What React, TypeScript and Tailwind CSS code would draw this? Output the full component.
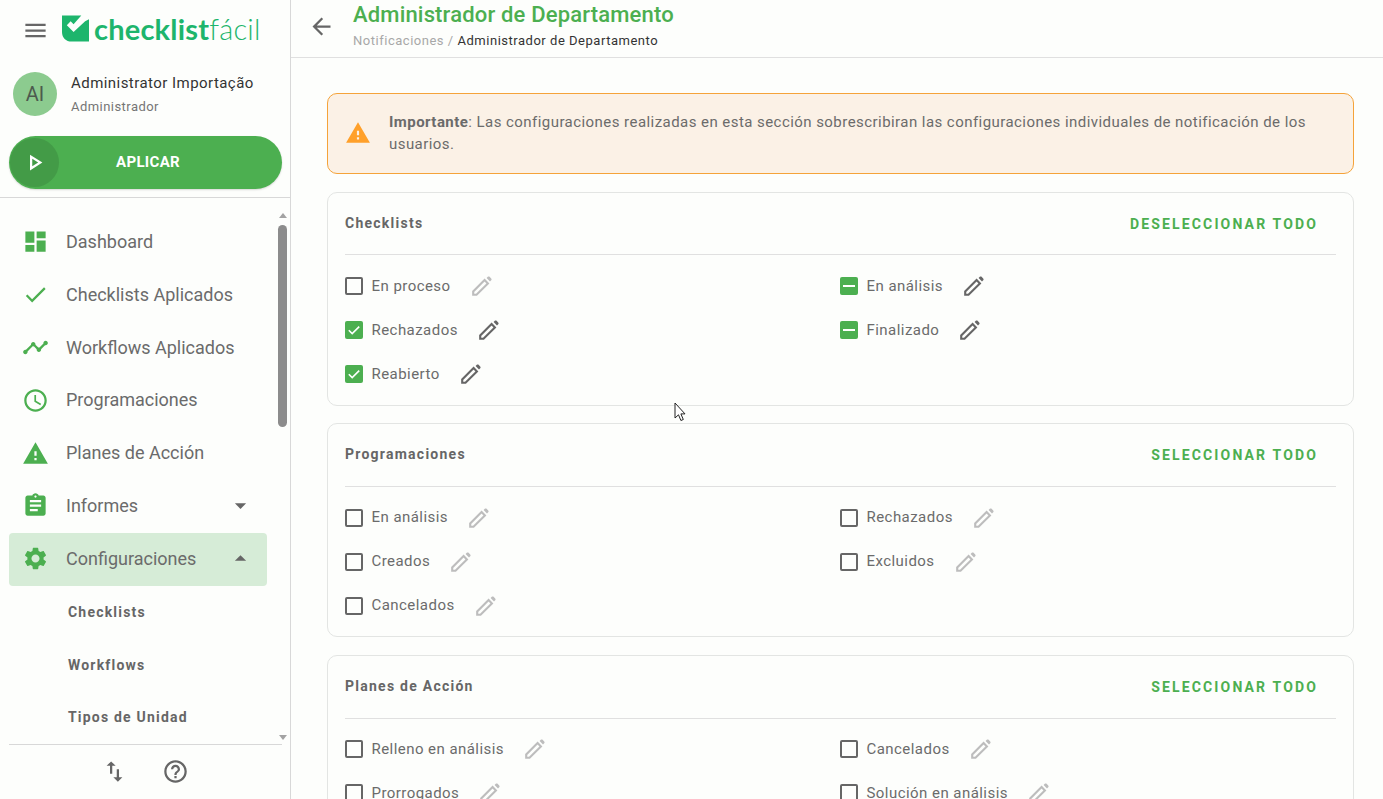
function Icon({ d, className }: { d: string; className: string }) {
  return (
    <svg viewBox="0 0 24 24" fill="currentColor" className={className}>
      <path d={d} />
    </svg>
  );
}

function Pencil({ className }: { className: string }) {
  return (
    <svg viewBox="0 0 20 20" className={className}>
      <path d="M1.2 18.8v-3.3L12.6 4.1l3.3 3.3L4.5 18.8z" fill="none" stroke="currentColor" strokeWidth="2.1" />
      <path d="M14.6 2l1.2-1.2c.5-.5 1.3-.5 1.8 0l1.6 1.6c.5.5.5 1.3 0 1.8L18 5.4z" fill="currentColor" />
    </svg>
  );
}

const NAV = [
  { label: 'Dashboard', d: 'M3 13h8V3H3v10zm0 8h8v-6H3v6zm10 0h8V11h-8v10zm0-18v6h8V3h-8z' },
  { label: 'Checklists Aplicados', d: 'M9 16.17L4.83 12l-1.42 1.41L9 19 21 7l-1.41-1.41z' },
  { label: 'Workflows Aplicados', d: 'M23 8c0 1.1-.9 2-2 2-.18 0-.35-.02-.51-.07l-3.56 3.55c.05.16.07.34.07.52 0 1.1-.9 2-2 2s-2-.9-2-2c0-.18.02-.36.07-.52l-2.55-2.55c-.16.05-.34.07-.52.07s-.36-.02-.52-.07l-4.55 4.56c.05.16.07.33.07.51 0 1.1-.9 2-2 2s-2-.9-2-2 .9-2 2-2c.18 0 .35.02.51.07l4.56-4.55C8.02 9.36 8 9.18 8 9c0-1.1.9-2 2-2s2 .9 2 2c0 .18-.02.36-.07.52l2.55 2.55c.16-.05.34-.07.52-.07s.36.02.52.07l3.55-3.56C19.02 8.35 19 8.18 19 8c0-1.1.9-2 2-2s2 .9 2 2z' },
  { label: 'Programaciones', d: 'M11.99 2C6.47 2 2 6.48 2 12s4.47 10 9.99 10C17.52 22 22 17.52 22 12S17.52 2 11.99 2zM12 20c-4.42 0-8-3.58-8-8s3.58-8 8-8 8 3.58 8 8-3.58 8-8 8zm.5-13H11v6l5.25 3.15.75-1.23-4.5-2.67z' },
  { label: 'Planes de Acción', d: 'M1 21h22L12 2 1 21zm12-3h-2v-2h2v2zm0-4h-2v-4h2v4z' },
  { label: 'Informes', d: 'M19 3h-4.18C14.4 1.84 13.3 1 12 1c-1.3 0-2.4.84-2.82 2H5c-1.1 0-2 .9-2 2v14c0 1.1.9 2 2 2h14c1.1 0 2-.9 2-2V5c0-1.1-.9-2-2-2zm-7 0c.55 0 1 .45 1 1s-.45 1-1 1-1-.45-1-1 .45-1 1-1zm2 14H7v-2h7v2zm3-4H7v-2h10v2zm0-4H7V7h10v2z', caret: 'down' },
  { label: 'Configuraciones', d: 'M19.14 12.94c.04-.3.06-.61.06-.94 0-.32-.02-.64-.07-.94l2.03-1.58c.18-.14.23-.41.12-.61l-1.92-3.32c-.12-.22-.37-.29-.59-.22l-2.39.96c-.5-.38-1.03-.7-1.62-.94l-.36-2.54c-.04-.24-.24-.41-.48-.41h-3.84c-.24 0-.43.17-.47.41l-.36 2.54c-.59.24-1.13.57-1.62.94l-2.39-.96c-.22-.08-.47 0-.59.22L2.74 8.87c-.12.21-.08.47.12.61l2.03 1.58c-.05.3-.09.63-.09.94s.02.64.07.94l-2.03 1.58c-.18.14-.23.41-.12.61l1.92 3.32c.12.22.37.29.59.22l2.39-.96c.5.38 1.03.7 1.62.94l.36 2.54c.05.24.24.41.48.41h3.84c.24 0 .44-.17.47-.41l.36-2.54c.59-.24 1.13-.56 1.62-.94l2.39.96c.22.08.47 0 .59-.22l1.92-3.32c.12-.22.07-.47-.12-.61l-2.01-1.58zM12 15.6c-1.98 0-3.6-1.62-3.6-3.6s1.62-3.6 3.6-3.6 3.6 1.62 3.6 3.6-1.62 3.6-3.6 3.6z', caret: 'up', active: true },
];

type Opt = { label: string; state?: 'checked' | 'mixed' };

const SECTIONS: { title: string; action: string; left: Opt[]; right: Opt[] }[] = [
  {
    title: 'Checklists',
    action: 'DESELECCIONAR TODO',
    left: [{ label: 'En proceso' }, { label: 'Rechazados', state: 'checked' }, { label: 'Reabierto', state: 'checked' }],
    right: [{ label: 'En análisis', state: 'mixed' }, { label: 'Finalizado', state: 'mixed' }],
  },
  {
    title: 'Programaciones',
    action: 'SELECCIONAR TODO',
    left: [{ label: 'En análisis' }, { label: 'Creados' }, { label: 'Cancelados' }],
    right: [{ label: 'Rechazados' }, { label: 'Excluidos' }],
  },
  {
    title: 'Planes de Acción',
    action: 'SELECCIONAR TODO',
    left: [{ label: 'Relleno en análisis' }, { label: 'Prorrogados' }],
    right: [{ label: 'Cancelados' }, { label: 'Solución en análisis' }],
  },
];

function Checkbox({ state }: { state?: Opt['state'] }) {
  if (!state) return <span className="w-[18px] h-[18px] rounded-[2px] border-2 border-[#666666] shrink-0" />;
  return (
    <span className="w-[18px] h-[18px] rounded-[2px] bg-[#4caf50] shrink-0 flex items-center justify-center">
      {state === 'checked' ? (
        <svg viewBox="0 0 18 18" className="w-[18px] h-[18px]" fill="none" stroke="#ffffff" strokeWidth="1.6">
          <path d="M3.8 9.2l3.4 3.4 7-7" />
        </svg>
      ) : (
        <span className="w-3 h-0.5 bg-white" />
      )}
    </span>
  );
}

function Option({ label, state }: Opt) {
  return (
    <div className="h-11 flex items-center">
      <Checkbox state={state} />
      <span className="ml-[8.5px] text-[15px] tracking-[0.45px] text-[#6b6b6b]">{label}</span>
      <Pencil className={`ml-[21px] w-5 h-5 ${state ? 'text-[#666666]' : 'text-[#bdbdbd]'}`} />
    </div>
  );
}

function Section({ title, action, left, right }: (typeof SECTIONS)[number]) {
  return (
    <section className="border border-[#e3e5e3] rounded-[10px] px-[17px] pb-[8.7px] mb-[17.6px] shrink-0">
      <div className="h-[62.7px] flex items-center justify-between border-b border-[#e0e0e0] pr-[18px]">
        <h2 className="text-sm font-bold tracking-[1.25px] text-[#666666] -mt-[1.5px]">{title}</h2>
        <button className="text-sm font-bold tracking-[2.15px] text-[#4caf50]">{action}</button>
      </div>
      <div className="grid grid-cols-[495px_1fr] pt-[8.6px]">
        <div>{left.map((o) => <Option key={o.label} {...o} />)}</div>
        <div>{right.map((o) => <Option key={o.label} {...o} />)}</div>
      </div>
    </section>
  );
}

function Logo() {
  return (
    <div className="flex items-center ml-[13px]">
      <svg viewBox="0 0 28 27" className="w-[27px] h-[27px] text-[#1db56c]">
        <path fill="currentColor" d="M0 0h12l8 0-8 9-3-3-4 4 7 7L24 6l4-2v23H10C4 27 0 23 0 17z" />
      </svg>
      <span className="ml-[5px] text-[29px] leading-none tracking-[0.2px] text-[#1db56c] font-['Lato',sans-serif]">
        <span className="font-bold">checklist</span>
        <span className="font-light">fácil</span>
      </span>
    </div>
  );
}

function Sidebar() {
  return (
    <aside className="w-[291px] h-screen shrink-0 flex flex-col border-r border-[#d8d8d8]">
      <div className="h-[57px] flex items-center pl-[22px] shrink-0">
        <Icon d="M3 18h18v-2H3v2zm0-5h18v-2H3v2zm0-7v2h18V6H3z" className="w-[27px] h-[27px] mt-1 text-[#666666]" />
        <Logo />
      </div>
      <div className="h-[79px] flex items-center pl-[13px] shrink-0 pb-[5px]">
        <div className="w-11 h-11 rounded-full bg-[#8ccb8f] flex items-center justify-center text-xl text-[#4d5a4e]">AI</div>
        <div className="ml-[14px] mt-[2px]">
          <div className="text-[15px] tracking-[0.45px] text-[#333333] leading-5">Administrator Importação</div>
          <div className="text-[13px] tracking-[0.45px] text-[#757575] leading-5 mt-[4px]">Administrador</div>
        </div>
      </div>
      <div className="px-[9px] shrink-0">
        <button className="w-[273px] h-[53px] rounded-full bg-[#4caf50] flex items-center shadow-[0_1px_2px_rgba(0,0,0,0.15)]">
          <span className="ml-px w-[49px] h-[49px] rounded-full bg-[#439b47] flex items-center justify-center">
            <Icon d="M10 8.64L15.27 12 10 15.36V8.64M8 5v14l11-7L8 5z" className="w-[27px] h-[27px] text-white" />
          </span>
          <span className="flex-1 pr-[45px] text-[15px] font-bold text-white tracking-[0.3px]">APLICAR</span>
        </button>
      </div>
      <div className="mt-2 border-t border-[#d8d8d8] flex-1 min-h-0 flex relative overflow-hidden">
        <nav className="flex-1 pl-[9px] pt-[17.6px] pr-[11px]">
          {NAV.map((n) => (
            <div key={n.label} className={`flex items-center pl-[13px] pr-[13px] rounded ${n.active ? 'h-[52.4px] mt-px pb-[1.4px] bg-[#d6ecd7]' : 'h-[52.8px]'}`}>
              <Icon d={n.d} className="w-[27px] h-[27px] text-[#4caf50] shrink-0" />
              <span className="ml-[17px] text-lg text-[#6b6b6b] flex-1">{n.label}</span>
              {n.caret && (
                <Icon d={n.caret === 'down' ? 'M7 10l5 5 5-5z' : 'M7 14l5-5 5 5z'} className="w-[27px] h-[27px] text-[#666666]" />
              )}
            </div>
          ))}
          {['Checklists', 'Workflows', 'Tipos de Unidad'].map((s) => (
            <div key={s} className="h-[52.6px] flex items-center pl-[59px] text-sm font-bold tracking-[1.2px] text-[#666666]">{s}</div>
          ))}
        </nav>
        <div className="w-[9px] mr-[3px] flex flex-col items-center pt-[15px] pb-[4px] h-[546px]">
          <span className="w-0 h-0 border-x-4 border-x-transparent border-b-[5px] border-b-[#a3a3a3]" />
          <span className="w-[9px] h-[202px] rounded-full bg-[#8c8c8c] mt-[7px]" />
          <span className="mt-auto w-0 h-0 border-x-4 border-x-transparent border-t-[5px] border-t-[#a3a3a3]" />
        </div>
      </div>
      <div className="h-[55px] shrink-0 mx-[9px] w-[273px] border-t border-[#d8d8d8] flex items-center justify-center gap-[34px] pr-[2px] pb-[2px]">
        <Icon d="M16 17.01V10h-2v7.01h-3L15 21l4-3.99h-3zM9 3L5 6.99h3V14h2V6.99h3L9 3z" className="w-[27px] h-[27px] text-[#666666]" />
        <Icon d="M11 18h2v-2h-2v2zm1-16C6.48 2 2 6.48 2 12s4.48 10 10 10 10-4.48 10-10S17.52 2 12 2zm0 18c-4.41 0-8-3.59-8-8s3.59-8 8-8 8 3.59 8 8-3.59 8-8 8zm0-14c-2.21 0-4 1.79-4 4h2c0-1.1.9-2 2-2s2 .9 2 2c0 2-3 1.75-3 5h2c0-2.25 3-2.5 3-5 0-2.21-1.79-4-4-4z" className="w-[27px] h-[27px] text-[#666666]" />
      </div>
    </aside>
  );
}

export default function App() {
  return (
    <div className="h-screen overflow-hidden flex bg-[#fdfefc] font-['Roboto',sans-serif] relative">
      <Sidebar />
      <main className="flex-1 min-w-0 flex flex-col">
        <header className="h-[58px] shrink-0 border-b border-[#e0e0e0] flex items-start pl-[17px]">
          <Icon d="M20 11H7.83l5.59-5.59L12 4l-8 8 8 8 1.41-1.41L7.83 13H20v-2z" className="w-[27px] h-[27px] mt-[13px] text-[#666666]" />
          <div className="ml-[18px] pt-px">
            <h1 className="text-[22px] leading-7 font-medium tracking-[0.17px] text-[#4caf50]">Administrador de Departamento</h1>
            <p className="text-[13px] leading-4 mt-[4px] tracking-[0.52px] text-[#a8a8a8]">
              Notificaciones / <span className="text-[#333333]">Administrador de Departamento</span>
            </p>
          </div>
        </header>
        <div className="flex-1 min-h-0 overflow-hidden flex flex-col pt-[35px] pl-9 pr-[29px]">
          <div className="h-[81px] shrink-0 mb-[17.7px] rounded-[10px] border border-[#f5a33a] bg-[#fbf1e6] flex items-center pl-[17px] pr-[30px]">
            <Icon d="M1 21h22L12 2 1 21zm12-3h-2v-2h2v2zm0-4h-2v-4h2v4z" className="w-[26px] h-[26px] text-[#ffa02a] shrink-0 mb-[2px]" />
            <p className="ml-[18px] pb-0.5 text-[15px] leading-[22px] tracking-[0.445px] text-[#6b6b6b]">
              <strong className="font-bold">Importante</strong>: Las configuraciones realizadas en esta sección sobrescribiran las configuraciones individuales de notificación de los usuarios.
            </p>
          </div>
          {SECTIONS.map((s) => <Section key={s.title} {...s} />)}
        </div>
      </main>
      <svg viewBox="0 0 14 22" className="absolute left-[674px] top-[402px] w-[14px] h-[22px]">
        <path d="M1 1v15l3.5-3.2 2.4 5.7 2.4-1-2.4-5.6H11z" fill="#ffffff" stroke="#222222" strokeWidth="1" />
      </svg>
    </div>
  );
}
